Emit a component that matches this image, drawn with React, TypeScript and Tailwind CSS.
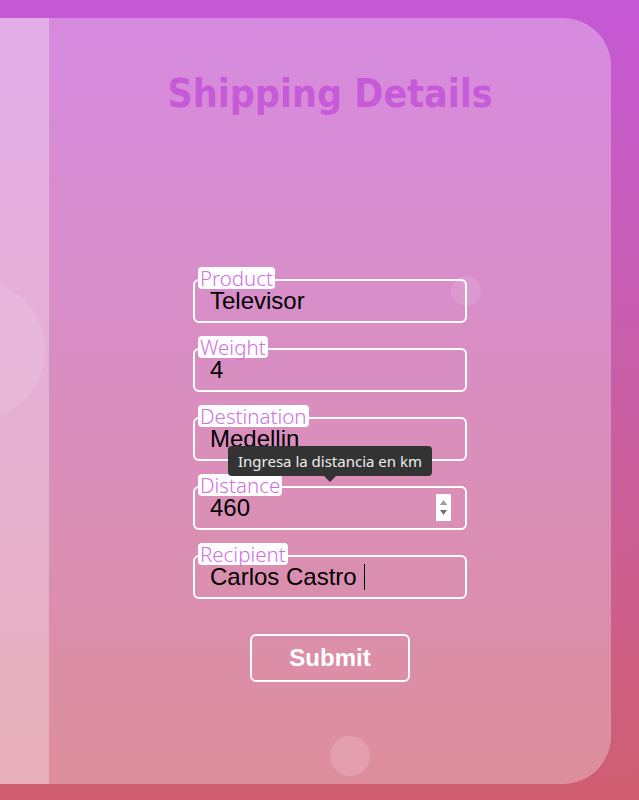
const fields = [
  { label: 'Product', value: 'Televisor' },
  { label: 'Weight', value: '4' },
  { label: 'Destination', value: 'Medellin' },
  { label: 'Distance', value: '460', number: true },
  { label: 'Recipient', value: 'Carlos Castro ', caret: true },
];

function Field({ label, value, number, caret }: { label: string; value: string; number?: boolean; caret?: boolean }) {
  return (
    <div className="relative w-[274px] h-[44px]">
      <div className="flex h-full items-center rounded-md border-2 border-white pl-[15px] text-[24px] text-black font-['Liberation_Sans',Arial,sans-serif]">
        <span className="whitespace-pre">{value}</span>
        {caret && <span className="ml-[1px] inline-block h-[26px] w-px bg-black" />}
      </div>
      <span className="absolute -top-[12px] left-[5px] rounded-[4px] bg-white px-[2px] text-[20.5px] leading-[22px] font-light text-[#d16fe2] font-['Noto_Sans',sans-serif]">
        {label}
      </span>
      {number && (
        <div className="absolute right-[16px] top-[8px] flex h-[27px] w-[15px] flex-col items-center justify-center gap-[5px] bg-white">
          <svg width="7" height="5" viewBox="0 0 7 5"><path d="M3.5 0L7 5H0z" fill="#9a9a9a" /></svg>
          <svg width="7" height="5" viewBox="0 0 7 5"><path d="M0 0h7L3.5 5z" fill="#6f6f6f" /></svg>
        </div>
      )}
      {number && (
        <div className="absolute -top-[40px] left-[35px] flex h-[30px] w-[204px] items-center justify-center rounded-[4px] bg-[#333333] text-[15px] text-[#eeeeee] font-['Noto_Sans',sans-serif]">
          Ingresa la distancia en km
          <span className="absolute -bottom-[6px] left-[96px] h-0 w-0 border-x-[6px] border-t-[6px] border-x-transparent border-t-[#333333]" />
        </div>
      )}
    </div>
  );
}

export default function App() {
  return (
    <div className="h-[800px] w-full bg-gradient-to-b from-[#c558d5] to-[#cf5e70] pt-[18px] pr-[28px]">
      <div className="relative flex h-[766px] overflow-hidden rounded-r-[48px] bg-white/30">
        <div className="relative w-[49px] shrink-0 overflow-hidden bg-white/30">
          <div className="absolute -left-[95px] top-[262px] h-[140px] w-[140px] rounded-full bg-white/10" />
        </div>
        <div className="relative flex flex-1 flex-col items-center">
          <h1 className="mt-[52px] text-[39px] font-bold leading-[48px] text-[#c75ad8] font-['DejaVu_Sans_Condensed','DejaVu_Sans',sans-serif]">
            Shipping Details
          </h1>
          <div className="mt-[161px] flex flex-col gap-[25px]">
            {fields.map((f) => (
              <Field key={f.label} {...f} />
            ))}
          </div>
          <button className="mt-[35px] h-[48px] w-[160px] rounded-md border-2 border-white text-[24px] font-bold text-white font-['Liberation_Sans',Arial,sans-serif]">
            Submit
          </button>
          <div className="absolute left-[402px] top-[258px] h-[30px] w-[30px] rounded-full bg-white/10" />
          <div className="absolute left-[281px] top-[718px] h-[40px] w-[40px] rounded-full bg-white/15" />
        </div>
      </div>
    </div>
  );
}
